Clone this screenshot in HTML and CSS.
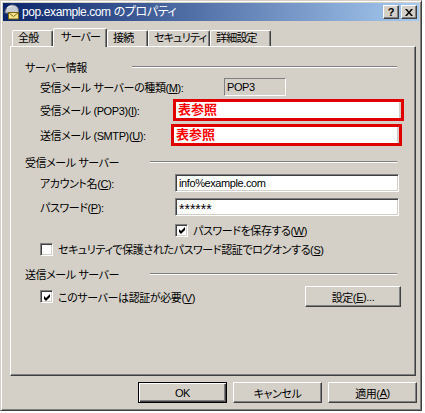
FILE: index.html
```html
<!DOCTYPE html>
<html lang="ja">
<head>
  <meta charset="UTF-8">
  <title>pop.example.com のプロパティ</title>
  <link rel="stylesheet" href="styles.css">
</head>
<body>

  <div class="window">
    <!-- タイトルバー -->
    <div class="titlebar">
      <svg class="app-icon" width="16" height="16" viewBox="0 0 16 16">
        <path d="M1 9 C1 4 5 1 8.5 1 C12 1 14.5 3.5 14.5 7 L14.5 9 Z" fill="#c8ccd4" stroke="#6c7480"/>
        <path d="M3 4 C4 3 6 2 8 2" stroke="#fff" fill="none"/>
        <rect x="4.5" y="8.5" width="10" height="6.5" fill="#f6e68a" stroke="#7a6418"/>
        <path d="M4.5 8.5 L9.5 12.5 L14.5 8.5" fill="none" stroke="#7a6418"/>
      </svg>
      <span class="title">pop.example.com のプロパティ</span>
      <div class="caption-btns">
        <span class="cap-btn help">?</span>
        <span class="cap-btn">
          <svg width="8" height="7" viewBox="0 0 8 7">
            <path d="M0 0 L2 0 L4 2.5 L6 0 L8 0 L5 3.5 L8 7 L6 7 L4 4.5 L2 7 L0 7 L3 3.5 Z" fill="#000"/>
          </svg>
        </span>
      </div>
    </div>

    <!-- タブ -->
    <div class="tabs">
      <div class="tab t-general">全般</div>
      <div class="tab active">サーバー</div>
      <div class="tab t-connect">接続</div>
      <div class="tab t-security">セキュリティ</div>
      <div class="tab t-advanced">詳細設定</div>
    </div>

    <div class="panel">
      <!-- サーバー情報 -->
      <div class="group-head first">
        <span class="group-title">サーバー情報</span><span class="etch"></span>
      </div>
      <div class="row row-type">
        <span class="label label-type">受信メール サーバーの種類(<u>M</u>):</span>
        <span class="static-box">POP3</span>
      </div>
      <div class="row row-mark">
        <span class="label label-mark1">受信メール (POP3)(<u>I</u>):</span>
        <span class="mark-box">表参照</span>
      </div>
      <div class="row row-mark">
        <span class="label label-mark2">送信メール (SMTP)(<u>U</u>):</span>
        <span class="mark-box">表参照</span>
      </div>

      <!-- 受信メール サーバー -->
      <div class="group-head">
        <span class="group-title">受信メール サーバー</span><span class="etch"></span>
      </div>
      <div class="row row-field">
        <span class="label">アカウント名(<u>C</u>):</span>
        <span class="edit">info%example.com</span>
      </div>
      <div class="row row-field row-pass">
        <span class="label">パスワード(<u>P</u>):</span>
        <span class="edit edit-pass">******</span>
      </div>
      <div class="row row-check row-save">
        <span class="checkbox checked">
          <svg width="9" height="9" viewBox="0 0 9 9"><path d="M1 3 L3 5 L7 1 L7 4 L3 8 L1 6 Z" fill="#000"/></svg>
        </span>
        <span>パスワードを保存する(<u>W</u>)</span>
      </div>
      <div class="row row-check row-spa">
        <span class="checkbox"></span>
        <span>セキュリティで保護されたパスワード認証でログオンする(<u>S</u>)</span>
      </div>

      <!-- 送信メール サーバー -->
      <div class="group-head group-out">
        <span class="group-title">送信メール サーバー</span><span class="etch"></span>
      </div>
      <div class="row row-auth">
        <span class="checkbox checked">
          <svg width="9" height="9" viewBox="0 0 9 9"><path d="M1 3 L3 5 L7 1 L7 4 L3 8 L1 6 Z" fill="#000"/></svg>
        </span>
        <span>このサーバーは認証が必要(<u>V</u>)</span>
        <span class="btn btn-settings">設定(<u>E</u>)...</span>
      </div>
    </div>

    <!-- ダイアログボタン -->
    <div class="dlg-buttons">
      <span class="btn default">OK</span>
      <span class="btn">キャンセル</span>
      <span class="btn">適用(<u>A</u>)</span>
    </div>
  </div>

</body>
</html>
```

FILE: styles.css
```css
body {
  margin: 0;
  background-color: #fff;
  font-family: "Liberation Sans", "Noto Sans CJK JP", sans-serif;
  font-size: 11px;
  font-feature-settings: "palt";
  letter-spacing: -0.4px;
  color: #000;
}

u {
  text-decoration: underline;
  text-underline-offset: 1px;
}

.window {
  box-sizing: border-box;
  width: 422px;
  height: 411px;
  padding: 2px;
  background-color: #d4d0c8;
  border: 1px solid;
  border-color: #d4d0c8 #404040 #404040 #d4d0c8;
  box-shadow: inset 1px 1px #fff, inset -1px -1px #808080;
}

/* タイトルバー */
.titlebar {
  height: 18px;
  display: flex;
  align-items: center;
  background: linear-gradient(to right, #0a246a, #a6caf0);
  color: #fff;
}

.app-icon {
  margin-left: 1px;
  flex-shrink: 0;
}

.title {
  margin-left: 2px;
  font-size: 12px;
  line-height: 18px;
}

.caption-btns {
  margin-left: auto;
  margin-right: 2px;
  display: flex;
  gap: 2px;
}

.cap-btn {
  box-sizing: border-box;
  width: 16px;
  height: 14px;
  display: flex;
  align-items: center;
  justify-content: center;
  background-color: #d4d0c8;
  border: 1px solid;
  border-color: #fff #404040 #404040 #fff;
  box-shadow: inset -1px -1px #808080;
  color: #000;
}

.cap-btn.help {
  font-weight: bold;
  font-size: 11px;
  letter-spacing: 0;
  line-height: 12px;
}

/* タブ */
.tabs {
  display: flex;
  align-items: flex-end;
  height: 18px;
  margin-top: 7px;
  padding-left: 9px;
}

.tab {
  box-sizing: border-box;
  height: 16px;
  padding-left: 5px;
  line-height: 15px;
  letter-spacing: -0.8px;
  border-top: 1px solid #fff;
  border-left: 1px solid #fff;
  border-right: 1px solid #404040;
  border-radius: 2px 2px 0 0;
  box-shadow: inset -1px 0 #808080;
  white-space: nowrap;
  overflow: hidden;
}

.t-general { width: 41px; }
.t-connect { width: 41px; }
.t-security { width: 62px; }
.t-advanced { width: 61px; }

.tab.active {
  position: relative;
  z-index: 1;
  width: 54px;
  height: 19px;
  margin-bottom: -1px;
  padding-left: 7px;
  line-height: 17px;
  background-color: #d4d0c8;
}

/* パネル */
.panel {
  box-sizing: border-box;
  width: 406px;
  height: 330px;
  margin-left: 7px;
  padding: 13px 0 0 14px;
  border: 1px solid;
  border-color: #fff #404040 #404040 #fff;
  box-shadow: inset -1px -1px #808080;
}

.group-head {
  display: flex;
  align-items: center;
  width: 372px;
  height: 14px;
  margin-top: 9px;
}

.group-head.first {
  margin-top: 0;
}

.group-head.group-out {
  margin-top: 10px;
}

.group-title {
  width: 125px;
  flex-shrink: 0;
  white-space: nowrap;
}

.group-head.first .group-title {
  width: 107px;
}

.etch {
  flex: 1;
  height: 0;
  border-top: 1px solid #808080;
  border-bottom: 1px solid #fff;
}

.row {
  display: flex;
  align-items: center;
  margin-left: 15px;
  white-space: nowrap;
}

.label {
  width: 135px;
  flex-shrink: 0;
}

.row-type {
  height: 18px;
  margin-top: 4px;
}

.label-type {
  width: 184px;
}

.static-box {
  box-sizing: border-box;
  width: 62px;
  height: 18px;
  padding-left: 2px;
  line-height: 16px;
  border: 1px solid;
  border-color: #808080 #fff #fff #808080;
}

.row-mark {
  height: 22px;
  margin-top: 3px;
}

.label-mark1 { width: 133px; }
.label-mark2 { width: 131px; }

.mark-box {
  box-sizing: border-box;
  width: 231px;
  height: 22px;
  padding-left: 2px;
  border: 3px solid #e00000;
  background-color: #fff;
  box-shadow: inset -2px 0 #d4d0c8;
  color: #ff0000;
  font-weight: bold;
  font-size: 13px;
  letter-spacing: 0;
  line-height: 16px;
}

.row-field {
  height: 18px;
  margin-top: 5px;
}

.row-pass {
  margin-top: 6px;
}

.edit {
  box-sizing: border-box;
  width: 224px;
  height: 18px;
  padding-left: 3px;
  line-height: 16px;
  background-color: #fff;
  border: 1px solid;
  border-color: #808080 #fff #fff #808080;
  box-shadow: inset 1px 1px #404040, inset -1px -1px #d4d0c8;
}

.edit-pass {
  font-size: 14px;
  letter-spacing: 0;
  line-height: 20px;
}

.row-check {
  height: 16px;
}

.row-save {
  margin-top: 6px;
  margin-left: 150px;
}

.row-spa {
  margin-top: 3px;
}

.checkbox {
  box-sizing: border-box;
  width: 13px;
  height: 13px;
  margin-right: 5px;
  flex-shrink: 0;
  display: flex;
  align-items: center;
  justify-content: center;
  background-color: #fff;
  border: 1px solid;
  border-color: #808080 #fff #fff #808080;
  box-shadow: inset 1px 1px #404040, inset -1px -1px #d4d0c8;
}

.checkbox svg {
  margin: 1px 0 0 1px;
}

.row-auth {
  width: 361px;
  height: 21px;
  margin-top: 5px;
}

/* ボタン */
.btn {
  box-sizing: border-box;
  display: flex;
  align-items: center;
  justify-content: center;
  width: 89px;
  height: 21px;
  background-color: #d4d0c8;
  border: 1px solid;
  border-color: #fff #404040 #404040 #fff;
  box-shadow: inset -1px -1px #808080;
}

.btn-settings {
  width: 96px;
  margin-left: auto;
}

.btn.default {
  border-color: #000;
  box-shadow: inset 1px 1px #fff, inset -1px -1px #404040, inset -2px -2px #808080;
}

.dlg-buttons {
  display: flex;
  justify-content: flex-end;
  gap: 6px;
  margin-top: 6px;
  padding-right: 2px;
}
```
